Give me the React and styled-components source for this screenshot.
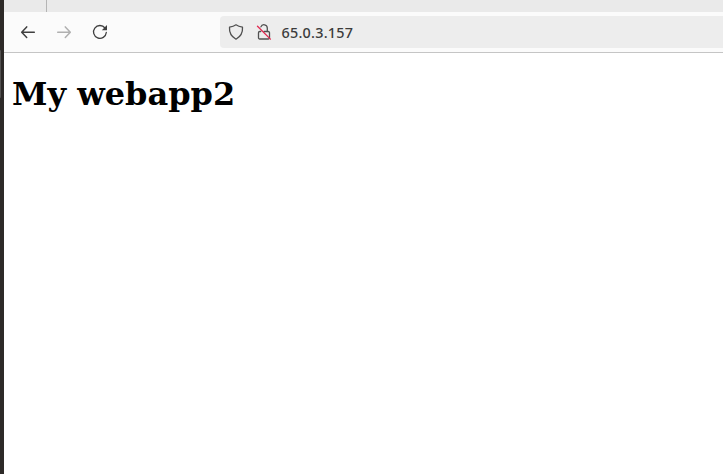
import React from "react";
import styled, { createGlobalStyle } from "styled-components";

const GlobalStyle = createGlobalStyle`
  * { box-sizing: border-box; }
  body { margin: 0; background: #fff; overflow: hidden; }
`;

const Desktop = styled.div`
  display: flex;
  width: 723px;
  height: 474px;
  overflow: hidden;
`;

const Dock = styled.div`
  flex: none;
  width: 4px;
  height: 100%;
  padding-top: 50px;
  background: #2d2a28;
`;

const DockMarker = styled.div`
  width: 1px;
  height: 48px;
  background: #535150;
  border-radius: 0 1px 1px 0;
`;

const Browser = styled.div`
  flex: 1;
  min-width: 0;
  display: flex;
  flex-direction: column;
`;

const TabStrip = styled.div`
  flex: none;
  height: 12px;
  background: #eaeaea;
`;

const PinnedArea = styled.div`
  width: 43px;
  height: 12px;
  border-right: 1px solid #b5b5b5;
`;

const Toolbar = styled.div`
  flex: none;
  display: flex;
  align-items: center;
  height: 41px;
  background: #fbfbfb;
  border-bottom: 1px solid #c5c5c5;
`;

const Navigation = styled.div`
  display: flex;
  gap: 20px;
  width: 216px;
  padding-left: 16px;
`;

const IconButton = styled.button`
  display: flex;
  width: 16px;
  height: 16px;
  padding: 0;
  border: 0;
  background: none;
  color: ${({ disabled }) => (disabled ? "#b0b0b0" : "#3f3f3f")};
`;

const AddressBar = styled.div`
  flex: 1;
  display: flex;
  align-items: center;
  height: 32px;
  padding-left: 8px;
  gap: 12px;
  background: #ededed;
  border-radius: 4px 0 0 4px;
  color: #505050;
`;

const Address = styled.span`
  margin-left: -3px;
  padding: 2px 0 0 0.5px;
  color: #3c3c3c;
  font: 500 14.4px/20px "Noto Sans", sans-serif;
  letter-spacing: 0.24px;
`;

const Page = styled.main`
  flex: 1;
  padding: 0 8px;
  background: #fff;
`;

const Heading = styled.h1`
  margin: 23px 0 0;
  color: #000;
  font: bold 32px/37px "DejaVu Serif", serif;
  white-space: nowrap;
`;

const Glyph = ({ weight = 1.3, children }) => (
  <svg width="16" height="16" viewBox="0 0 16 16" fill="none" stroke="currentColor"
    strokeWidth={weight} strokeLinecap="round" strokeLinejoin="round">
    {children}
  </svg>
);

export default function App() {
  return (
    <>
      <GlobalStyle />
      <Desktop>
        <Dock><DockMarker /></Dock>
        <Browser>
          <TabStrip><PinnedArea /></TabStrip>
          <Toolbar>
            <Navigation>
              <IconButton aria-label="Back">
                <Glyph weight={1.5}><path d="M14.300 8.200H2M6.700 2.900 1.700 8.200l5 5.200" /></Glyph>
              </IconButton>
              <IconButton aria-label="Forward" disabled>
                <Glyph weight={1.5}><path d="M1.700 8.200H14M9.300 2.900l5 5.300-5 5.200" /></Glyph>
              </IconButton>
              <IconButton aria-label="Reload">
                <Glyph>
                  <path d="M13 4A6.400 6.400 0 1 0 14.300 8.500" />
                  <path d="M15 1v4.700a.500.500 0 0 1-.500.500H9.800z" fill="currentColor" stroke="none" />
                </Glyph>
              </IconButton>
            </Navigation>
            <AddressBar>
              <Glyph><path d="M8 .8c2 1.400 4.200 2 6.500 2.400.4 5.200-1.300 9-6.500 12C2.800 12.200 1.100 8.400 1.500 3.200 3.800 2.800 6 2.200 8 .8Z" /></Glyph>
              <Glyph>
                <path d="M4.700 7.500H3.700a1.200 1.200 0 0 0-1.200 1.200v5.100A1.200 1.200 0 0 0 3.700 15h8.600a1.200 1.200 0 0 0 1.200-1.200V8.700a1.200 1.200 0 0 0-1.200-1.200H8M11.300 7.300V4a3.300 3.300 0 0 0-6.400-1.100" />
                <path d="m1.500 2.200 12.900 12.900" stroke="#e22850" />
              </Glyph>
              <Address>65.0.3.157</Address>
            </AddressBar>
          </Toolbar>
          <Page><Heading>My webapp2</Heading></Page>
        </Browser>
      </Desktop>
    </>
  );
}
